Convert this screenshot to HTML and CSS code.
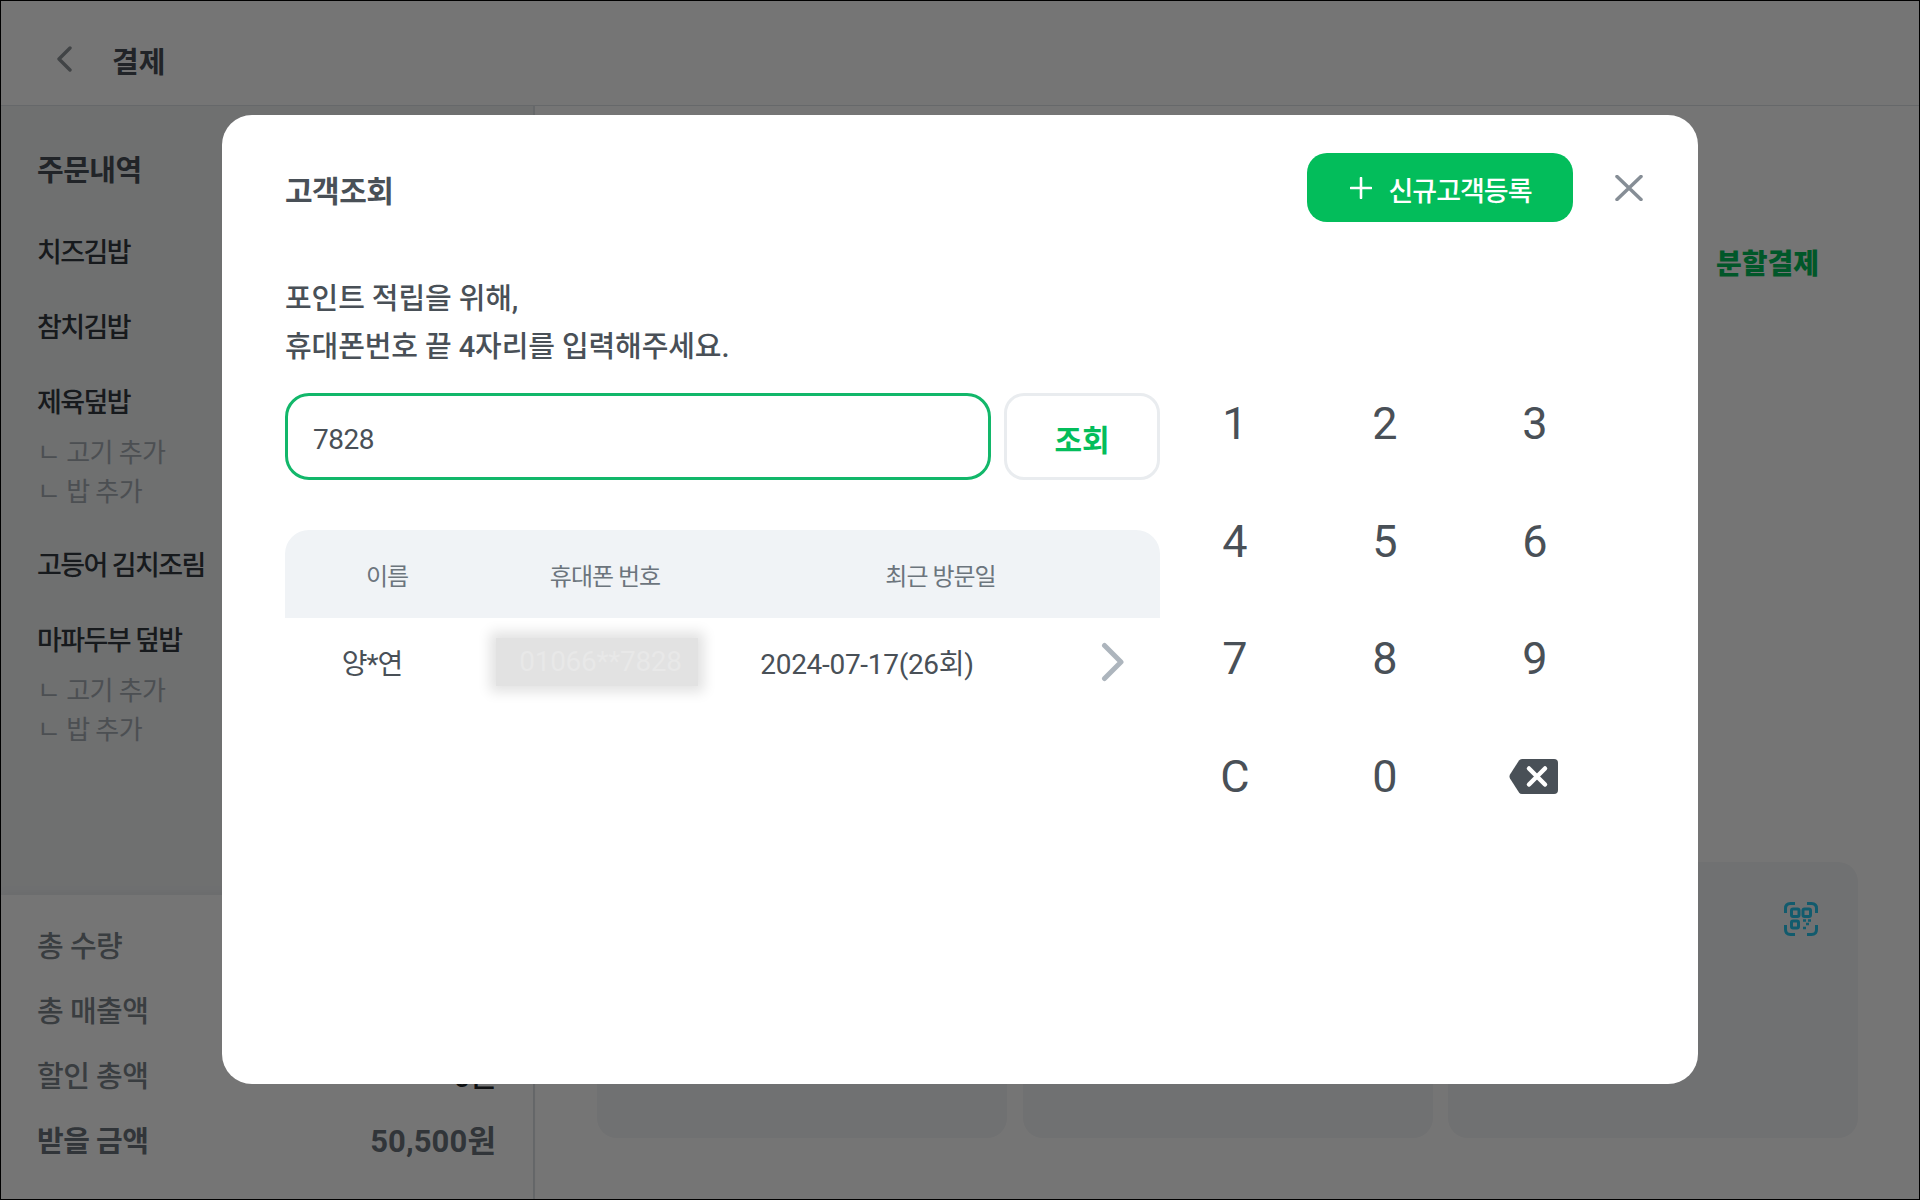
FILE: index.html
```html
<!DOCTYPE html>
<html lang="ko">
<head>
    <meta charset="UTF-8">
    <meta name="viewport" content="width=device-width, initial-scale=1.0">
    <title>결제</title>
    <link rel="stylesheet" href="styles.css">
</head>
<body>
    <div class="page">
        <header class="top-bar">
            <svg class="back-icon" width="16" height="26" viewBox="0 0 16 26">
                <path d="M14 2 L3 13 L14 24" fill="none" stroke="#8f9499" stroke-width="3.4" stroke-linecap="round" stroke-linejoin="round"/>
            </svg>
            <h1 class="page-title">결제</h1>
        </header>

        <div class="content">
            <aside class="order-panel">
                <div class="order-list">
                    <h2 class="order-heading">주문내역</h2>
                    <div class="order-item">치즈김밥</div>
                    <div class="order-item">참치김밥</div>
                    <div class="order-item">
                        제육덮밥
                        <div class="order-option first">ㄴ 고기 추가</div>
                        <div class="order-option">ㄴ 밥 추가</div>
                    </div>
                    <div class="order-item">고등어 김치조림</div>
                    <div class="order-item">
                        마파두부 덮밥
                        <div class="order-option first">ㄴ 고기 추가</div>
                        <div class="order-option">ㄴ 밥 추가</div>
                    </div>
                </div>
                <div class="summary">
                    <div class="summary-row"><span>총 수량</span></div>
                    <div class="summary-row"><span>총 매출액</span></div>
                    <div class="summary-row"><span>할인 총액</span><span class="summary-value">0원</span></div>
                    <div class="summary-row total"><span>받을 금액</span><span class="total-value">50,500원</span></div>
                </div>
            </aside>

            <main class="pay-panel">
                <div class="pay-tabs"><span class="split-pay">분할결제</span></div>
                <div class="pay-cards">
                    <div class="pay-card"></div>
                    <div class="pay-card"></div>
                    <div class="pay-card">
                        <svg class="qr-icon" width="34" height="34" viewBox="0 0 34 34" fill="none" stroke="#29c6ed" stroke-width="3">
                            <path d="M1.5 11 V6.5 Q1.5 1.5 6.5 1.5 H11"/>
                            <path d="M23 1.5 H27.5 Q32.5 1.5 32.5 6.5 V11"/>
                            <path d="M1.5 23 V27.5 Q1.5 32.5 6.5 32.5 H11"/>
                            <path d="M23 32.5 H27.5 Q32.5 32.5 32.5 27.5 V23"/>
                            <rect x="7.5" y="7" width="7.5" height="7.5" rx="1.5"/>
                            <rect x="19" y="7" width="7.5" height="7.5" rx="1.5"/>
                            <rect x="7.5" y="19" width="7" height="7" rx="1.5"/>
                            <path d="M19 18.5 H22 M24 18.5 H27 M22 22 H25 M19 26 H22" stroke-width="2.6"/>
                        </svg>
                    </div>
                </div>
            </main>
        </div>
    </div>

    <div class="overlay">
        <div class="modal">
            <div class="modal-header">
                <h2 class="modal-title">고객조회</h2>
                <button class="register-btn">
                    <svg width="22" height="22" viewBox="0 0 22 22">
                        <path d="M11 1 V21 M1 11 H21" stroke="#fff" stroke-width="2.6" stroke-linecap="round"/>
                    </svg>
                    <span class="register-label">신규고객등록</span>
                </button>
                <button class="close-btn">
                    <svg width="28" height="26" viewBox="0 0 28 26">
                        <path d="M2 1.5 L26 24.5 M26 1.5 L2 24.5" stroke="#868e96" stroke-width="3.5" stroke-linecap="round"/>
                    </svg>
                </button>
            </div>

            <div class="modal-body">
                <div class="lookup">
                    <p class="guide">포인트 적립을 위해,<br>휴대폰번호 끝 4자리를 입력해주세요.</p>
                    <div class="search-row">
                        <input class="phone-input" type="text" value="7828">
                        <button class="search-btn">조회</button>
                    </div>
                    <div class="result-table">
                        <div class="result-head">
                            <span>이름</span>
                            <span>휴대폰 번호</span>
                            <span>최근 방문일</span>
                        </div>
                        <div class="result-row">
                            <span class="cell-name">양*연</span>
                            <span class="cell-phone"><span class="blurred">01066**7828</span></span>
                            <span class="cell-date">2024-07-17(26회)</span>
                            <svg class="row-arrow" width="24" height="40" viewBox="0 0 24 40">
                                <path d="M3.5 3.5 L20 20 L3.5 36.5" fill="none" stroke="#adb5bd" stroke-width="5" stroke-linecap="round" stroke-linejoin="round"/>
                            </svg>
                        </div>
                    </div>
                </div>

                <div class="keypad">
                    <button class="key">1</button>
                    <button class="key">2</button>
                    <button class="key">3</button>
                    <button class="key">4</button>
                    <button class="key">5</button>
                    <button class="key">6</button>
                    <button class="key">7</button>
                    <button class="key">8</button>
                    <button class="key">9</button>
                    <button class="key">C</button>
                    <button class="key">0</button>
                    <button class="key key-erase">
                        <svg width="49" height="35" viewBox="0 0 49 35">
                            <path d="M13 0 H45 Q49 0 49 4 V31 Q49 35 45 35 H13 Q11 35 10 33.5 L1 19.5 Q0 17.5 1 15.5 L10 1.5 Q11 0 13 0 Z" fill="#495057"/>
                            <path d="M20 9.5 L36 25.5 M36 9.5 L20 25.5" stroke="#fff" stroke-width="4.5" stroke-linecap="round"/>
                        </svg>
                    </button>
                </div>
            </div>
        </div>
    </div>
</body>
</html>
```

FILE: styles.css
```css
* {
    box-sizing: border-box;
}
body {
    margin: 0;
    font-family: Roboto, 'Noto Sans CJK KR', sans-serif;
    color: #212529;
    background: #fff;
}
h1, h2, p {
    margin: 0;
}
button {
    font-family: inherit;
    cursor: pointer;
}
.page {
    width: 1920px;
    height: 1200px;
    border: 1px solid #000;
    display: flex;
    flex-direction: column;
}
.top-bar {
    height: 105px;
    flex: none;
    display: flex;
    align-items: center;
    padding: 15px 0 0 55px;
    border-bottom: 1px solid #dee2e6;
}
.back-icon {
    margin-bottom: 4px;
}
.page-title {
    margin-left: 40px;
    padding-top: 5px;
    font-size: 29px;
    font-weight: 700;
    line-height: 40px;
    color: #495057;
}
.content {
    flex: 1;
    display: flex;
    min-height: 0;
}
.order-panel {
    width: 534px;
    flex: none;
    display: flex;
    flex-direction: column;
    border-right: 2px solid #dee2e6;
}
.order-list {
    flex: 1;
    padding: 45px 36px 0;
    background: #f1f3f5;
}
.order-heading {
    font-size: 29px;
    font-weight: 700;
    line-height: 40px;
    letter-spacing: -0.5px;
    margin-bottom: 42px;
    color: #495057;
}
.order-item {
    font-size: 27px;
    font-weight: 500;
    line-height: 40px;
    letter-spacing: -1.6px;
    margin-bottom: 35px;
    color: #343a40;
}
.order-option {
    font-size: 26px;
    font-weight: 400;
    line-height: 39px;
    letter-spacing: -0.6px;
    color: #a5acb4;
}
.order-option.first {
    margin-top: 11px;
}
.order-option:last-child {
    margin-bottom: -1px;
}
.summary {
    height: 304px;
    flex: none;
    padding: 32px 37px 0 36px;
    box-shadow: 0 -4px 8px rgba(0, 0, 0, 0.03);
}
.summary-row {
    display: flex;
    justify-content: space-between;
    font-size: 29px;
    font-weight: 500;
    line-height: 40px;
    letter-spacing: -0.5px;
    margin-bottom: 25px;
    color: #7d858d;
}
.summary-value {
    color: #212529;
}
.summary-row.total {
    font-weight: 700;
    color: #6c757d;
}
.total-value {
    font-size: 31px;
    letter-spacing: 0.1px;
}
.pay-panel {
    flex: 1;
    display: flex;
    flex-direction: column;
    justify-content: space-between;
    padding: 0 60px 61px 62px;
}
.pay-tabs {
    padding: 139px 40px 0 0;
    text-align: right;
}
.split-pay {
    font-size: 28px;
    font-weight: 900;
    line-height: 40px;
    color: #03bd5b;
}
.pay-cards {
    display: grid;
    grid-template-columns: repeat(3, 410px);
    gap: 15.5px;
}
.pay-card {
    height: 276px;
    background: #f5f6f8;
    border-radius: 20px;
    display: flex;
    justify-content: flex-end;
    padding: 40px 40px 0 0;
}
.overlay {
    position: fixed;
    inset: 0;
    display: flex;
    align-items: center;
    justify-content: center;
    padding-bottom: 1px;
    background: rgba(0, 0, 0, 0.54);
}
.modal {
    width: 1476px;
    height: 969px;
    background: #fff;
    border-radius: 30px;
    padding: 38px 55px 0 63px;
    color: #495057;
}
.modal-header {
    display: flex;
    align-items: center;
    height: 69px;
}
.modal-title {
    flex: 1;
    padding-top: 9px;
    font-size: 30px;
    font-weight: 700;
    line-height: 40px;
    letter-spacing: -0.5px;
}
.register-btn {
    width: 266px;
    height: 69px;
    padding: 0 0 0 2px;
    display: flex;
    align-items: center;
    justify-content: center;
    gap: 16px;
    border: none;
    border-radius: 20px;
    background: #03bd5b;
    color: #fff;
    font-size: 27px;
    font-weight: 500;
    letter-spacing: -1px;
}
.register-label {
    padding-top: 3px;
}
.close-btn {
    margin-left: 42px;
    padding: 0;
    width: 28px;
    height: 26px;
    border: none;
    background: none;
}
.modal-body {
    display: flex;
    margin-top: 53px;
}
.lookup {
    width: 875px;
    flex: none;
}
.guide {
    font-size: 29px;
    font-weight: 500;
    line-height: 48px;
    letter-spacing: -0.1px;
}
.search-row {
    display: flex;
    gap: 13px;
    margin-top: 22px;
}
.phone-input {
    width: 706px;
    height: 87px;
    padding: 6px 25px 0;
    border: 3px solid #12b76a;
    border-radius: 24px;
    outline: none;
    font-family: inherit;
    font-size: 28px;
    letter-spacing: -0.5px;
    color: #495057;
}
.search-btn {
    width: 156px;
    height: 87px;
    padding: 3px 0 0;
    border: 3px solid #e9ecef;
    border-radius: 20px;
    background: #fff;
    color: #03bd5b;
    font-size: 30px;
    font-weight: 700;
}
.result-table {
    margin-top: 50px;
}
.result-head, .result-row {
    display: grid;
    align-items: center;
    text-align: center;
}
.result-head {
    grid-template-columns: 204px 232px 439px;
    height: 88px;
    background: #f0f3f6;
    border-radius: 24px 24px 0 0;
    font-size: 24px;
    letter-spacing: -1px;
    color: #6c757d;
}
.result-row {
    grid-template-columns: 174px 275px 266px 160px;
    height: 88px;
    font-size: 28px;
    letter-spacing: -0.3px;
}
.cell-name {
    letter-spacing: -1px;
}
.blurred {
    display: inline-block;
    width: 202px;
    height: 48px;
    padding-left: 8px;
    line-height: 48px;
    background: #e2e2e2;
    box-shadow: 0 0 12px 6px #e2e2e2;
    color: #e8e8e8;
}
.row-arrow {
    justify-self: end;
    margin-right: 35px;
}
.keypad {
    margin-top: 90px;
    width: 450px;
    height: 470px;
    display: grid;
    grid-template-columns: repeat(3, 150px);
    grid-auto-rows: 117.5px;
}
.key {
    display: flex;
    align-items: center;
    justify-content: center;
    padding: 0;
    border: none;
    background: none;
    color: #495057;
    font-size: 45px;
    font-weight: 400;
}
.key-erase svg {
    margin-right: 3px;
}
```
